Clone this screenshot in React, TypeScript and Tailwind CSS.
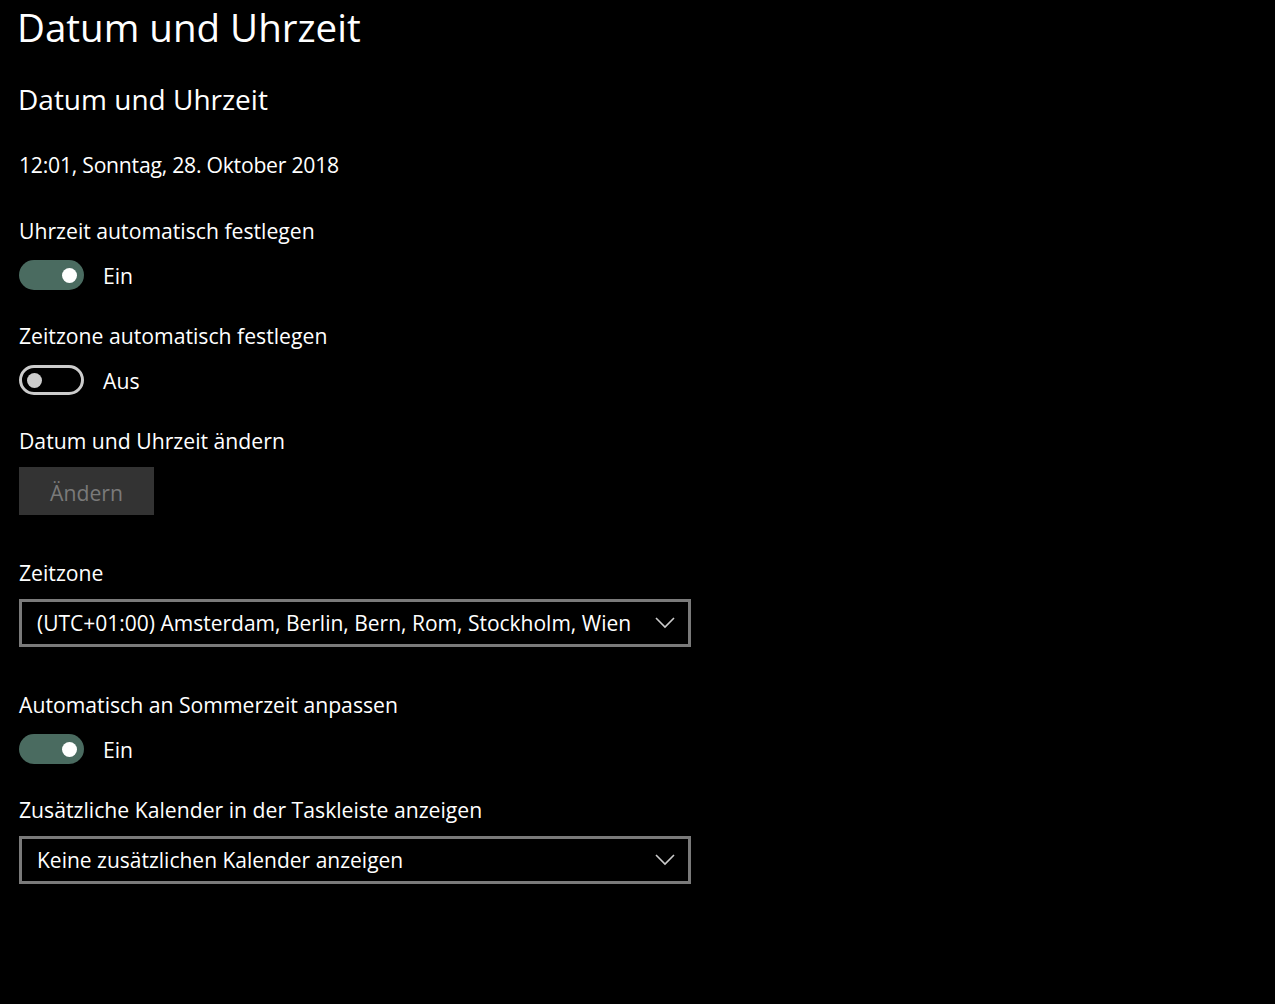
import React from "react";

function ToggleOn() {
  return (
    <div className="flex h-[30px] w-[65px] items-center justify-end rounded-full bg-[#4a6b60] pr-[7px]">
      <div className="h-[15px] w-[15px] rounded-full bg-white" />
    </div>
  );
}

function ToggleOff() {
  return (
    <div className="flex h-[30px] w-[65px] items-center rounded-full border-[3px] border-[#cccccc] pl-[5px]">
      <div className="h-[15px] w-[15px] rounded-full bg-[#cccccc]" />
    </div>
  );
}

function Chevron() {
  return (
    <svg width="20" height="12" viewBox="0 0 20 12" className="shrink-0">
      <path d="M1 1 L10 10 L19 1" fill="none" stroke="#cccccc" strokeWidth="1.6" />
    </svg>
  );
}

function Dropdown({ text }: { text: string }) {
  return (
    <div className="flex h-[48px] w-[672px] items-center justify-between border-[3px] border-[#7a7a7a] pl-[15px] pr-[13px]">
      <span className="h-[30px] whitespace-nowrap text-[21px] leading-[31px] text-white">{text}</span>
      <Chevron />
    </div>
  );
}

function Label({ children, className = "" }: { children: React.ReactNode; className?: string }) {
  return (
    <div className={"h-[30px] whitespace-nowrap text-[21.2px] leading-[30px] text-white " + className}>{children}</div>
  );
}

function ToggleRow({ on }: { on: boolean }) {
  return (
    <div className="mt-[14px] flex h-[30px] items-center gap-[19px]">
      {on ? <ToggleOn /> : <ToggleOff />}
      <span className="h-[30px] text-[21.2px] leading-[32px]">{on ? "Ein" : "Aus"}</span>
    </div>
  );
}

export default function App() {
  return (
    <div
      className="min-h-[1004px] w-full bg-black pl-[19px] text-white"
      style={{ fontFamily: '"Open Sans", "Noto Sans", sans-serif' }}
    >
      <div className="h-[52px] pt-[2px] text-[38.5px] leading-[50px] -ml-[2px]">Datum und Uhrzeit</div>
      <div className="mt-[27px] h-[40px] text-[28px] leading-[40px] -ml-[1px]">Datum und Uhrzeit</div>
      <Label className="mt-[31px] tracking-[-0.25px]">12:01, Sonntag, 28. Oktober 2018</Label>

      <Label className="mt-[36px]">Uhrzeit automatisch festlegen</Label>
      <ToggleRow on={true} />

      <Label className="mt-[31px]">Zeitzone automatisch festlegen</Label>
      <ToggleRow on={false} />

      <Label className="mt-[31px]">Datum und Uhrzeit ändern</Label>
      <div className="mt-[11px] flex h-[48px] w-[135px] items-center justify-center bg-[#333333] pt-[3px] text-[21.2px] text-[#7a7a7a]">
        Ändern
      </div>

      <Label className="mt-[43px]">Zeitzone</Label>
      <div className="mt-[11px]">
        <Dropdown text="(UTC+01:00) Amsterdam, Berlin, Bern, Rom, Stockholm, Wien" />
      </div>

      <Label className="mt-[43px]">Automatisch an Sommerzeit anpassen</Label>
      <ToggleRow on={true} />

      <Label className="mt-[31px]">Zusätzliche Kalender in der Taskleiste anzeigen</Label>
      <div className="mt-[11px]">
        <Dropdown text="Keine zusätzlichen Kalender anzeigen" />
      </div>
    </div>
  );
}
